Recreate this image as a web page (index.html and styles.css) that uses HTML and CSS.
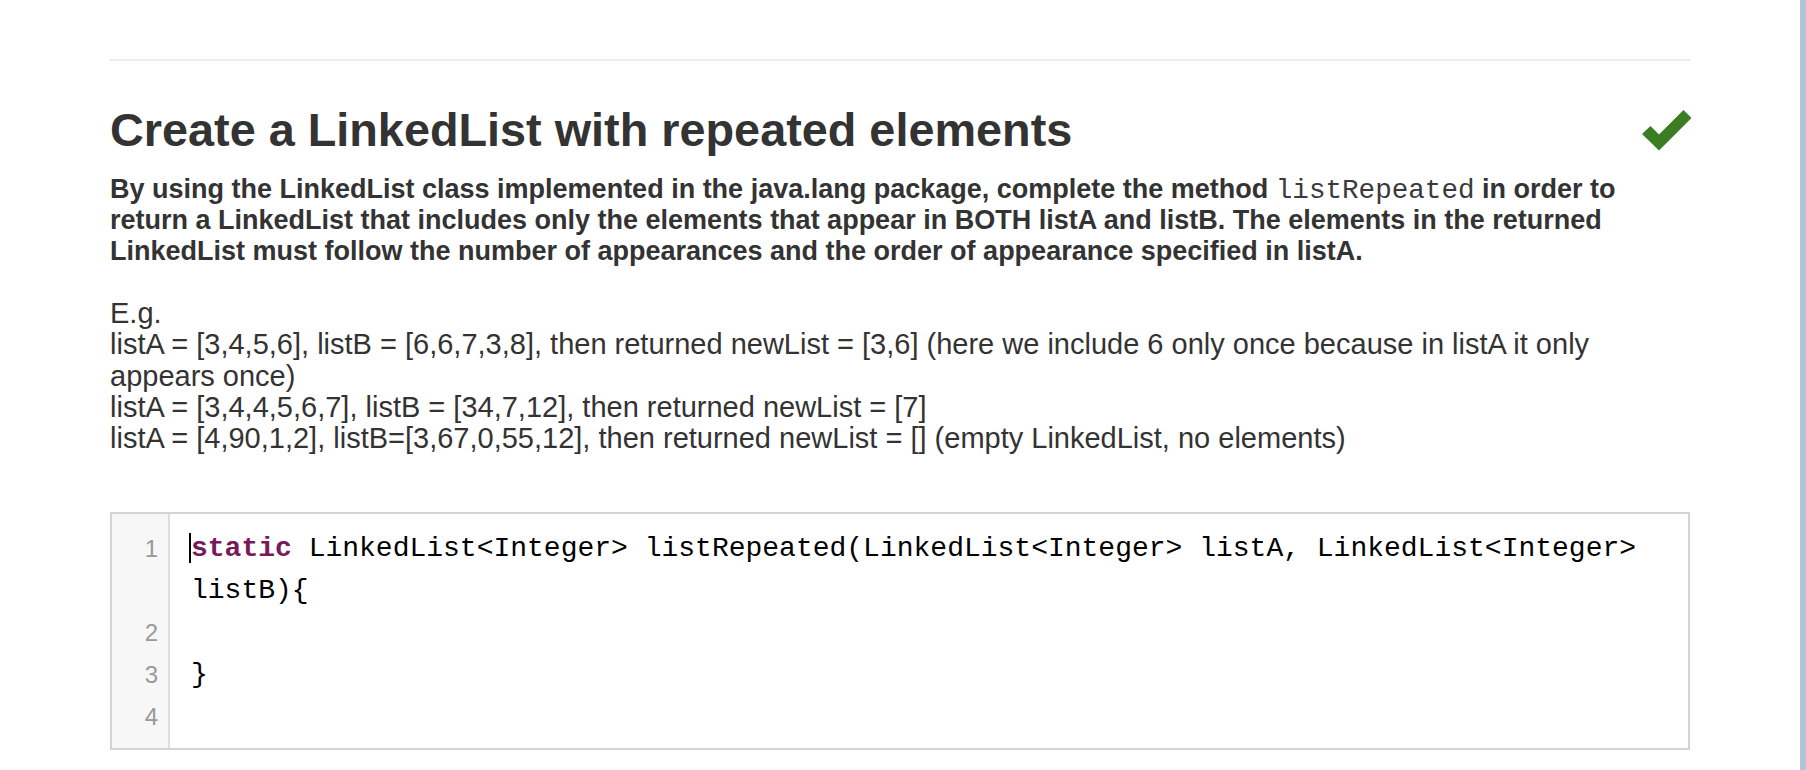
FILE: index.html
```html
<!DOCTYPE html>
<html lang="en">
<head>
<meta charset="utf-8">
<title>Create a LinkedList with repeated elements</title>
<link rel="stylesheet" href="styles.css">
</head>
<body>
<div class="page">
  <main class="question">
    <hr class="rule">
    <div class="title-row">
      <h2 class="title">Create a LinkedList with repeated elements</h2>
      <svg class="check" width="50" height="41" viewBox="0 0 50 41" aria-label="Correct">
        <polygon points="0,24 8.5,16 17,24.5 41.5,0 49.5,8 17,40.5" fill="#3a7d22"/>
      </svg>
    </div>
    <p class="desc">By using the LinkedList class implemented in the java.lang package, complete the method <code class="inline">listRepeated</code> in order to return a LinkedList that includes only the elements that appear in BOTH listA and listB. The elements in the returned LinkedList must follow the number of appearances and the order of appearance specified in listA.</p>
    <p class="examples">E.g.<br>listA = [3,4,5,6], listB = [6,6,7,3,8], then returned newList = [3,6] (here we include 6 only once because in listA it only appears once)<br>listA = [3,4,4,5,6,7], listB = [34,7,12], then returned newList = [7]<br>listA = [4,90,1,2], listB=[3,67,0,55,12], then returned newList = [] (empty LinkedList, no elements)</p>
    <div class="editor">
      <div class="num">1</div>
      <div class="code"><span class="cursor"></span><span class="kw">static</span> LinkedList&lt;Integer&gt; listRepeated(LinkedList&lt;Integer&gt; listA, LinkedList&lt;Integer&gt; listB){</div>
      <div class="num">2</div>
      <div class="code"></div>
      <div class="num">3</div>
      <div class="code">}</div>
      <div class="num">4</div>
      <div class="code"></div>
    </div>
  </main>
</div>
</body>
</html>
```

FILE: styles.css
```css
html, body {
  margin: 0;
  padding: 0;
  background: #fff;
}

.page {
  width: 1800px;
  height: 770px;
  border-right: 6px solid #b4c3d6;
  overflow: hidden;
}

.question {
  margin-left: 110px;
  width: 1580px;
  padding-top: 59px;
  color: #333;
  font-family: "Liberation Sans", Arial, Helvetica, sans-serif;
}

.rule {
  margin: 0;
  border: 0;
  border-top: 2px solid #eeeeee;
}

.title-row {
  display: flex;
  justify-content: space-between;
  align-items: center;
  margin-top: 41px;
}

.title {
  margin: 0;
  font-size: 46.8px;
  line-height: 56px;
  font-weight: bold;
  color: #333;
}

.check {
  display: block;
  margin-right: -2px;
}

.desc {
  margin: 15.5px 0 0;
  font-size: 27px;
  line-height: 31.4px;
  font-weight: bold;
}

.inline {
  font-family: "Liberation Mono", "Courier New", monospace;
  font-size: 27.6px;
  line-height: 1;
  font-weight: normal;
  color: #3a3a3a;
}

.examples {
  margin: 30px 0 0;
  font-size: 29px;
  line-height: 31.4px;
}

.editor {
  margin-top: 57.5px;
  border: 2px solid #d4d4d4;
  display: grid;
  grid-template-columns: 56px 1fr;
  padding: 14px 0 10px;
  background: linear-gradient(to right, #f7f7f7 0, #f7f7f7 56px, #dddddd 56px, #dddddd 58px, #ffffff 58px);
}

.num {
  font-family: "Liberation Sans", Arial, sans-serif;
  font-size: 24px;
  line-height: 42px;
  color: #999;
  text-align: right;
  padding-right: 10px;
}

.code {
  position: relative;
  font-family: "Liberation Mono", "Courier New", monospace;
  font-size: 28px;
  line-height: 42px;
  min-height: 42px;
  color: #000;
  padding-left: 23px;
  padding-right: 8px;
  white-space: pre-wrap;
}

.kw {
  color: #78195a;
  font-weight: bold;
}

.cursor {
  position: absolute;
  left: 21px;
  top: 5px;
  width: 2px;
  height: 30px;
  background: #000;
}
```
